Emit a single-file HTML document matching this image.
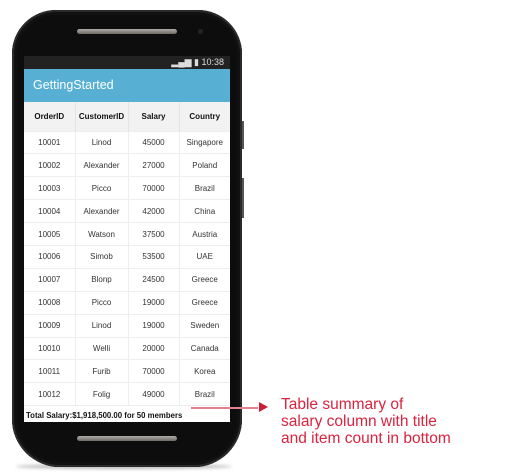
<!DOCTYPE html>
<html><head><style>
*{margin:0;padding:0;box-sizing:border-box}
body{width:517px;height:476px;background:#fff;position:relative;overflow:hidden;font-family:"Liberation Sans",Arial,sans-serif}
.phone{position:absolute;left:12px;top:10px;width:230px;height:457px;background:#0d0d0d;border-radius:44px 44px 48px 48px;box-shadow:inset 0 0 0 2px #2a2a2a,inset 0 0 0 5px #111}
.shadow{position:absolute;left:16px;top:464px;width:216px;height:5px;background:#bbb;border-radius:50%;filter:blur(1.5px)}
.speaker{position:absolute;left:77px;top:29px;width:100px;height:5px;border-radius:3px;background:linear-gradient(#b0aba5,#6d6965)}
.speaker.b{top:436px}
.cam{position:absolute;left:198px;top:29px;width:5px;height:5px;border-radius:50%;background:#2a2226}
.btn{position:absolute;left:242px;width:2px;background:#555}
.screen{position:absolute;left:24px;top:56px;width:206px;height:366px;background:#fff;overflow:hidden}
.status{height:13px;background:#222;color:#ddd;font-size:9px;text-align:right;padding-right:6px;line-height:13px}
.bar{height:33px;background:#57b0d4;color:#fff;font-size:12.5px;line-height:33px;padding-left:9px}
table{border-collapse:collapse;width:206px;table-layout:fixed}
td,th{text-align:center;font-size:8px;color:#333;border-right:1px solid #eee;border-bottom:1px solid #eee;height:22.9px;padding:0}
th{height:29px;background:#f2f2f2;font-weight:bold;color:#111;border-right:1px solid #e4e4e4}
td:last-child,th:last-child{border-right:none}
.foot{font-size:7.8px;font-weight:bold;color:#111;padding:5px 0 0 2px}
.note{position:absolute;left:281px;top:396px;color:#d9233f;font-size:15.5px;line-height:17px}
.arrow{position:absolute;left:191px;top:407px;width:67px;height:1.5px;background:#e0828f}
.head{position:absolute;left:259px;top:402px;width:0;height:0;border-left:9px solid #c92038;border-top:5px solid transparent;border-bottom:5px solid transparent}
</style></head><body>
<div class="shadow"></div>
<div class="phone"></div>
<div class="btn" style="top:121px;height:28px"></div>
<div class="btn" style="top:178px;height:40px"></div>
<div class="speaker"></div><div class="cam"></div><div class="speaker b"></div>
<div class="screen">
<div class="status">▂▄▆ ▮ 10:38</div>
<div class="bar">GettingStarted</div>
<table>
<colgroup><col style="width:51px"><col style="width:53px"><col style="width:51px"><col style="width:51px"></colgroup>
<tr><th>OrderID</th><th>CustomerID</th><th>Salary</th><th>Country</th></tr>
<tr><td>10001</td><td>Linod</td><td>45000</td><td>Singapore</td></tr>
<tr><td>10002</td><td>Alexander</td><td>27000</td><td>Poland</td></tr>
<tr><td>10003</td><td>Picco</td><td>70000</td><td>Brazil</td></tr>
<tr><td>10004</td><td>Alexander</td><td>42000</td><td>China</td></tr>
<tr><td>10005</td><td>Watson</td><td>37500</td><td>Austria</td></tr>
<tr><td>10006</td><td>Simob</td><td>53500</td><td>UAE</td></tr>
<tr><td>10007</td><td>Blonp</td><td>24500</td><td>Greece</td></tr>
<tr><td>10008</td><td>Picco</td><td>19000</td><td>Greece</td></tr>
<tr><td>10009</td><td>Linod</td><td>19000</td><td>Sweden</td></tr>
<tr><td>10010</td><td>Welli</td><td>20000</td><td>Canada</td></tr>
<tr><td>10011</td><td>Furib</td><td>70000</td><td>Korea</td></tr>
<tr><td style="height:18px">10012</td><td>Folig</td><td>49000</td><td>Brazil</td></tr>
</table>
<div class="foot">Total Salary:$1,918,500.00 for 50 members</div>
</div>
<div class="arrow"></div><div class="head"></div>
<div class="note">Table summary of<br>salary column with title<br>and item count in bottom</div>
</body></html>
